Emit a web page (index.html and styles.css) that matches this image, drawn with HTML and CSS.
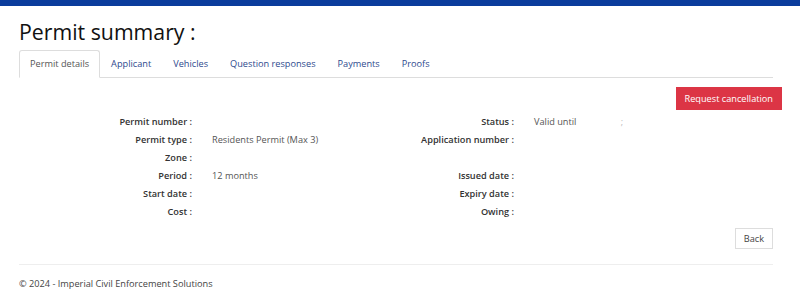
FILE: index.html
```html
<!DOCTYPE html>
<html lang="en">
<head>
    <meta charset="UTF-8">
    <meta name="viewport" content="width=device-width, initial-scale=1.0">
    <title>Permit summary</title>
    <link rel="stylesheet" href="styles.css">
</head>
<body>
    <div class="topbar"></div>
    <div class="container">
        <h1>Permit summary :</h1>
        <ul class="tabs">
            <li class="active"><a href="#">Permit details</a></li>
            <li><a href="#">Applicant</a></li>
            <li><a href="#">Vehicles</a></li>
            <li><a href="#">Question responses</a></li>
            <li><a href="#">Payments</a></li>
            <li><a href="#">Proofs</a></li>
        </ul>

        <div class="toolbar">
            <button class="cancel-btn">Request cancellation</button>
        </div>

        <div class="details">
            <dl class="col col-left">
                <dt>Permit number :</dt><dd></dd>
                <dt>Permit type :</dt><dd>Residents Permit (Max 3)</dd>
                <dt>Zone :</dt><dd></dd>
                <dt>Period :</dt><dd>12 months</dd>
                <dt>Start date :</dt><dd></dd>
                <dt>Cost :</dt><dd></dd>
            </dl>
            <dl class="col col-right">
                <dt>Status :</dt><dd>Valid until <span class="faint">;</span></dd>
                <dt>Application number :</dt><dd></dd>
                <dt></dt><dd></dd>
                <dt>Issued date :</dt><dd></dd>
                <dt>Expiry date :</dt><dd></dd>
                <dt>Owing :</dt><dd></dd>
            </dl>
        </div>

        <div class="actions">
            <button class="back-btn">Back</button>
        </div>

        <footer>
            <p>&copy; 2024 - Imperial Civil Enforcement Solutions</p>
        </footer>
    </div>
</body>
</html>
```

FILE: styles.css
```css
body {
    font-family: 'Open Sans', sans-serif;
    font-size: 9.2px;
    color: #555;
    background-color: white;
    margin: 0;
    padding: 0;
}
.topbar {
    height: 6px;
    background-color: #0b3c9c;
}
.container {
    margin: 0 27px 0 19px;
}
h1 {
    font-size: 21.3px;
    font-weight: 400;
    color: #111;
    margin: 12px 0 4px;
    line-height: 28px;
}
.tabs {
    display: flex;
    list-style: none;
    margin: 0;
    padding: 0;
    border-bottom: 1px solid #ddd;
}
.tabs li {
    margin-bottom: -1px;
}
.tabs a {
    display: block;
    padding: 7px 10px;
    line-height: 12px;
    color: #2e4a8e;
    text-decoration: none;
    border: 1px solid transparent;
    border-radius: 3px 3px 0 0;
}
.tabs .active a {
    color: #555;
    border-color: #ddd #ddd white;
}
.toolbar {
    display: flex;
    justify-content: flex-end;
    margin: 9px -9px 0 0;
}
button {
    font-family: inherit;
    font-size: 9.2px;
    cursor: pointer;
    border-radius: 0;
}
.cancel-btn {
    background-color: #dc3545;
    color: white;
    border: none;
    padding: 5px 9px;
    line-height: 13px;
}
.details {
    display: flex;
    margin-top: 2px;
}
.col {
    display: grid;
    grid-template-rows: repeat(6, 18px);
    align-items: center;
    column-gap: 20px;
    margin: 0;
}
.col-left {
    grid-template-columns: 173px 150px;
}
.col-right {
    grid-template-columns: 152px 120px;
}
dt {
    text-align: right;
    font-weight: 600;
    color: #333;
}
dd {
    margin: 0;
}
.faint {
    margin-left: 42px;
    color: #bbb;
}
.actions {
    display: flex;
    justify-content: flex-end;
    margin-top: 8px;
}
.back-btn {
    background-color: white;
    color: #444;
    border: 1px solid #ddd;
    padding: 4px 8px;
    line-height: 11px;
}
footer {
    margin-top: 15px;
    border-top: 1px solid #eee;
}
footer p {
    margin: 0;
    padding-top: 12px;
    color: #444;
}
```
